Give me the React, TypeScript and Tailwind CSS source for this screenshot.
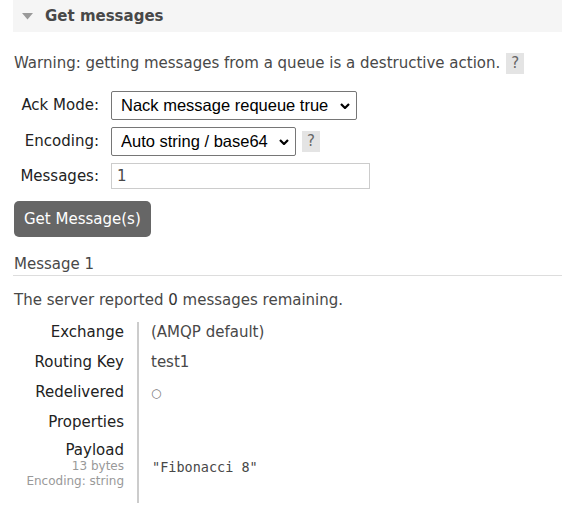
import { useState } from "react";

const rows: { label: string; value: string }[] = [
  { label: "Exchange", value: "(AMQP default)" },
  { label: "Routing Key", value: "test1" },
  { label: "Redelivered", value: "○" },
  { label: "Properties", value: "" },
];

function Help() {
  return (
    <span className="inline-flex h-[21px] w-[18px] items-center justify-center bg-[#e4e4e4] text-[15px] leading-none text-[#666]">
      ?
    </span>
  );
}

function Select({
  value,
  onChange,
  width,
  options,
}: {
  value: string;
  onChange: (v: string) => void;
  width: string;
  options: [string, string][];
}) {
  return (
    <div className={`relative ${width}`}>
      <select
        value={value}
        onChange={(e) => onChange(e.target.value)}
        className="h-[29px] w-full appearance-none rounded-[2px] border border-[#767676] bg-white pl-[9px] pr-6 font-['Liberation_Sans',Arial,sans-serif] text-[16.5px] text-black outline-none"
      >
        {options.map(([v, t]) => (
          <option key={v} value={v}>
            {t}
          </option>
        ))}
      </select>
      <svg
        className="pointer-events-none absolute right-[7px] top-[12px]"
        width="10"
        height="6"
        viewBox="0 0 10 6"
      >
        <path d="M1 1 L5 5 L9 1" fill="none" stroke="#000" strokeWidth="2.2" />
      </svg>
    </div>
  );
}

export default function App() {
  const [ack, setAck] = useState("requeue_true");
  const [enc, setEnc] = useState("auto");
  const [count, setCount] = useState("1");

  return (
    <div className="h-[515px] w-[562px] overflow-hidden bg-white pl-[13px] font-['DejaVu_Sans',Verdana,sans-serif] text-[15px] text-[#484848]">
      {/* section header */}
      <div className="flex h-8 items-center gap-[12px] bg-[#f5f5f5] pl-[9px]">
        <svg width="11" height="7" viewBox="0 0 11 7">
          <path d="M0 0 H11 L5.5 6.5 Z" fill="#9a9a9a" />
        </svg>
        <h2 className="text-[15px] font-bold text-[#484848]">Get messages</h2>
      </div>

      <p className="mt-[21px] flex items-center gap-[6px] pl-px leading-[21px]">
        Warning: getting messages from a queue is a destructive action.
        <Help />
      </p>

      {/* form */}
      <div className="mt-[17px] grid grid-cols-[86px_auto] items-center gap-x-[12px] gap-y-[7px] text-[#222]">
        <label className="text-right">Ack Mode:</label>
        <Select
          value={ack}
          onChange={setAck}
          width="w-[246px]"
          options={[
            ["requeue_true", "Nack message requeue true"],
            ["ack", "Automatic ack"],
            ["reject", "Reject requeue false"],
          ]}
        />

        <label className="text-right">Encoding:</label>
        <div className="flex items-center gap-[6px]">
          <Select
            value={enc}
            onChange={setEnc}
            width="w-[185px]"
            options={[
              ["auto", "Auto string / base64"],
              ["base64", "base64"],
            ]}
          />
          <Help />
        </div>

        <label className="text-right">Messages:</label>
        <div>
          <input
            value={count}
            onChange={(e) => setCount(e.target.value)}
            className="h-[26px] w-[259px] border border-[#ccc] px-[5px] text-[15px] text-[#484848] outline-none"
          />
        </div>
      </div>

      <button className="mt-[12px] ml-px h-9 rounded-[5px] bg-[#666] px-[10px] text-[15px] text-white">
        Get Message(s)
      </button>

      <h3 className="mt-[17px] border-b border-[#ddd] pb-px pl-px leading-5">Message 1</h3>

      <p className="mt-[14px] pl-px leading-5">
        The server reported <span className="text-[#333]">0</span> messages remaining.
      </p>

      {/* message details */}
      <div className="mt-[12px] grid grid-cols-[124px_auto]">
        {rows.map((r) => (
          <div key={r.label} className="contents">
            <div className="h-[30px] pr-[13px] text-right leading-5 text-[#222]">{r.label}</div>
            <div className="h-[30px] border-l-2 border-[#ccc] pl-[12px] leading-5">
              {r.value === "○" ? <span className="text-[12px] text-[#777]">○</span> : r.value}
            </div>
          </div>
        ))}
        <div className="pb-[14px] pr-[13px] text-right">
          <div className="leading-[17px] text-[#222]">Payload</div>
          <div className="text-[12px] leading-[15px] text-[#999]">13 bytes</div>
          <div className="text-[12px] leading-[15px] text-[#999]">Encoding: string</div>
        </div>
        <div className="border-l-2 border-[#ccc] pl-[13px] pt-[15px] font-['DejaVu_Sans_Mono',monospace] text-[13.5px] leading-5">
          "Fibonacci 8"
        </div>
      </div>
    </div>
  );
}
